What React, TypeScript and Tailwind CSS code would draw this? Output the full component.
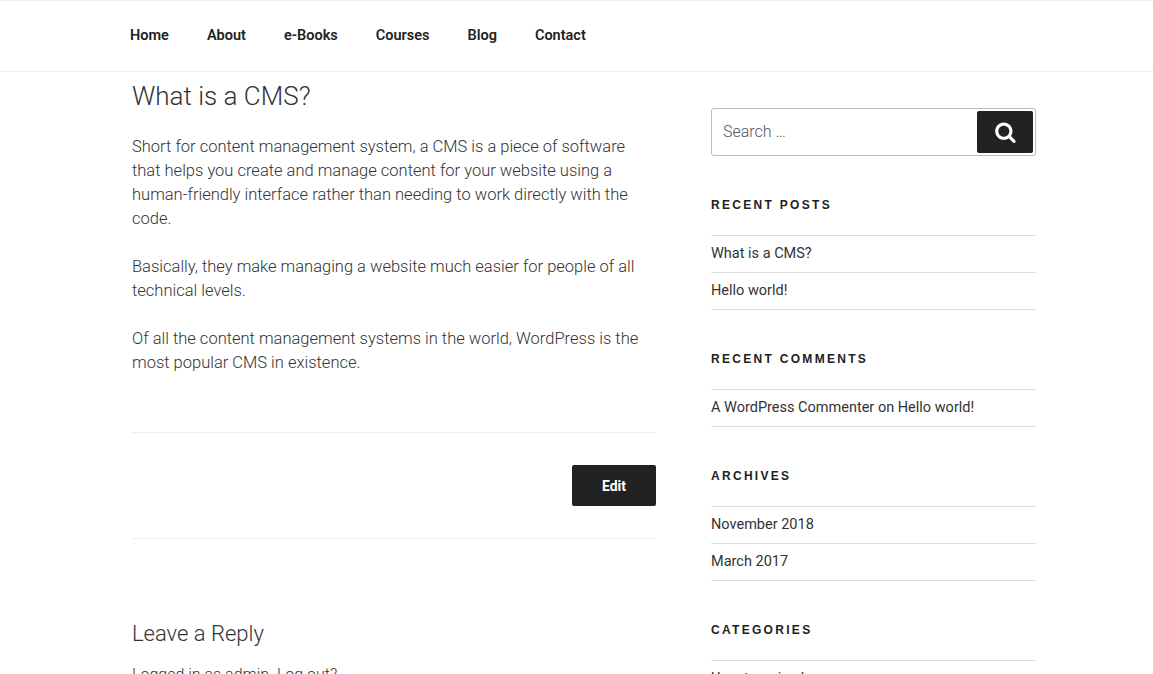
const font = "font-['Roboto',sans-serif]";

const navLinks = ['Home', 'About', 'e-Books', 'Courses', 'Blog', 'Contact'];

const widgets = [
  { title: 'Recent Posts', items: ['What is a CMS?', 'Hello world!'] },
  { title: 'Recent Comments', items: ['A WordPress Commenter on Hello world!'] },
  { title: 'Archives', items: ['November 2018', 'March 2017'] },
  { title: 'Categories', items: ['Uncategorized'] },
];

const Widget = ({ title, items }: { title: string; items: string[] }) => (
  <section className="mt-[39px]">
    <h2 className="h-5 text-[12px] leading-5 font-extrabold uppercase tracking-[2.3px] text-[#222222] font-['Liberation_Sans',sans-serif]">
      {title}
    </h2>
    <ul className="mt-5 border-b border-[#dddddd]">
      {items.map((item) => (
        <li
          key={item}
          className="h-[37px] border-t border-[#dddddd] text-[14.5px] leading-[36px] text-[#333333]"
        >
          {item}
        </li>
      ))}
    </ul>
  </section>
);

export default function App() {
  return (
    <div className={`h-[674px] overflow-hidden bg-white ${font}`}>
      <nav className="h-[72px] border-y border-[#eeeeee] pl-[130px] flex items-center gap-[38px] text-[14.5px] font-semibold text-[#222222]">
        {navLinks.map((link) => (
          <a key={link} href="#">
            {link}
          </a>
        ))}
      </nav>

      <div className="flex gap-[55px] pl-[132px]">
        <main className="w-[524px] shrink-0 pt-[7px] text-[#333333]">
          <h1 className="text-[26px] leading-[34px] font-light">What is a CMS?</h1>
          <div className="mt-[22px] space-y-6 text-[16.5px] leading-6 font-light">
            <p>
              Short for content management system, a CMS is a piece of software
              that helps you create and manage content for your website using a
              human-friendly interface rather than needing to work directly with the
              code.
            </p>
            <p>
              Basically, they make managing a website much easier for people of all
              technical levels.
            </p>
            <p>
              Of all the content management systems in the world, WordPress is the
              most popular CMS in existence.
            </p>
          </div>

          <div className="mt-[57px] border-y border-[#eeeeee] py-8 flex justify-end">
            <button className="w-[84px] h-[41px] bg-[#222222] rounded-[2px] text-white text-sm font-bold">
              Edit
            </button>
          </div>

          <h2 className="mt-[80px] text-[22px] leading-[30px] font-light">Leave a Reply</h2>
          <p className="mt-[14px] text-[16px] leading-6 font-light">
            Logged in as admin. Log out?
          </p>
        </main>

        <aside className="w-[325px] shrink-0 pt-9">
          <form className="h-12 border border-[#bbbbbb] rounded-[3px] flex items-center justify-between pl-[11px] pr-[2px]">
            <span className="text-[16px] text-[#555555] font-light">Search …</span>
            <button
              type="button"
              className="w-[56px] h-[42px] bg-[#222222] rounded-[2px] flex items-center justify-center"
            >
              <svg viewBox="0 0 30 32" className="w-[21px] h-[22px] fill-white">
                <path d="M20.571 14.857c0-4.411-3.589-8-8-8s-8 3.589-8 8 3.589 8 8 8 8-3.589 8-8zM29.714 29.714c0 1.25-1.036 2.286-2.286 2.286-0.607 0-1.196-0.25-1.607-0.679l-6.125-6.107c-2.089 1.446-4.589 2.214-7.125 2.214-6.946 0-12.571-5.625-12.571-12.571s5.625-12.571 12.571-12.571 12.571 5.625 12.571 12.571c0 2.536-0.768 5.036-2.214 7.125l6.125 6.125c0.411 0.411 0.661 1 0.661 1.607z" />
              </svg>
            </button>
          </form>

          {widgets.map((w) => (
            <Widget key={w.title} title={w.title} items={w.items} />
          ))}
        </aside>
      </div>
    </div>
  );
}
